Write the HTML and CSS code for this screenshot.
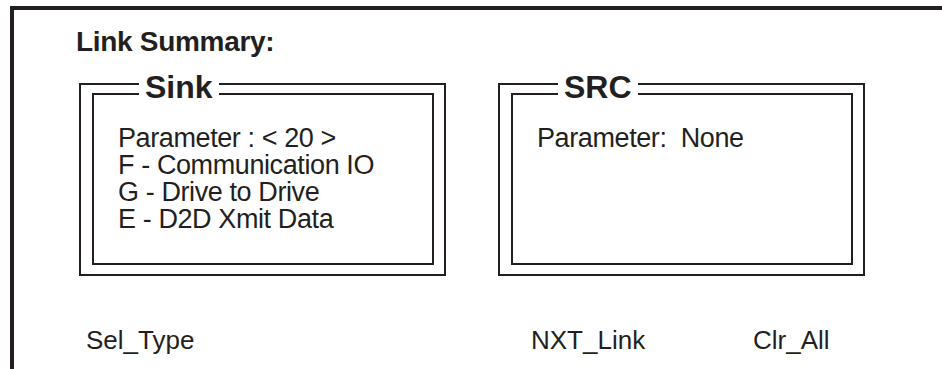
FILE: index.html
```html
<!DOCTYPE html>
<html lang="en">
<head>
    <meta charset="UTF-8">
    <title>Link Summary</title>
    <link rel="stylesheet" href="styles.css">
</head>
<body>

<div class="frame">
    <h1 class="title">Link Summary:</h1>

    <div class="boxes">
        <div class="box">
            <span class="legend">Sink</span>
            <div class="inner">
                <p>Parameter : &lt; 20 &gt;</p>
                <p>F - Communication IO</p>
                <p>G - Drive to Drive</p>
                <p>E - D2D Xmit Data</p>
            </div>
        </div>
        <div class="box">
            <span class="legend">SRC</span>
            <div class="inner">
                <p>Parameter:&nbsp; None</p>
            </div>
        </div>
    </div>

    <div class="keys">
        <span class="key">Sel_Type</span>
        <span class="key">NXT_Link</span>
        <span class="key">Clr_All</span>
    </div>
</div>

</body>
</html>
```

FILE: styles.css
```css
body {
    margin: 0;
    font-family: "Liberation Sans", Arial, sans-serif;
    color: #231f20;
    background: #fff;
}

.frame {
    margin: 6px 0 0 10px;
    height: 363px;
    box-sizing: border-box;
    border-top: 4px solid #231f20;
    border-left: 4px solid #231f20;
    padding: 16px 0 0 62px;
}

.title {
    margin: 0;
    font-size: 28px;
    font-weight: bold;
    line-height: 32px;
    letter-spacing: -0.3px;
}

.boxes {
    display: flex;
    gap: 52px;
    margin-top: 25px;
    margin-left: 3px;
}

.box {
    position: relative;
    width: 367px;
    height: 193px;
    box-sizing: border-box;
    border: 2px solid #231f20;
    padding: 8px 10px 9px 11px;
}

.inner {
    height: 100%;
    box-sizing: border-box;
    border: 2px solid #231f20;
    padding: 30px 0 0 24px;
}

.inner p {
    margin: 0;
    font-size: 27px;
    line-height: 27px;
    letter-spacing: -0.4px;
}

.legend {
    position: absolute;
    top: -15px;
    left: 58px;
    padding: 0 6px;
    background: #fff;
    font-size: 32px;
    font-weight: bold;
    line-height: 34px;
}

.keys {
    display: grid;
    grid-template-columns: 445px 222px auto;
    margin-top: 48px;
    padding-left: 10px;
    font-size: 26px;
    line-height: 32px;
}
```
